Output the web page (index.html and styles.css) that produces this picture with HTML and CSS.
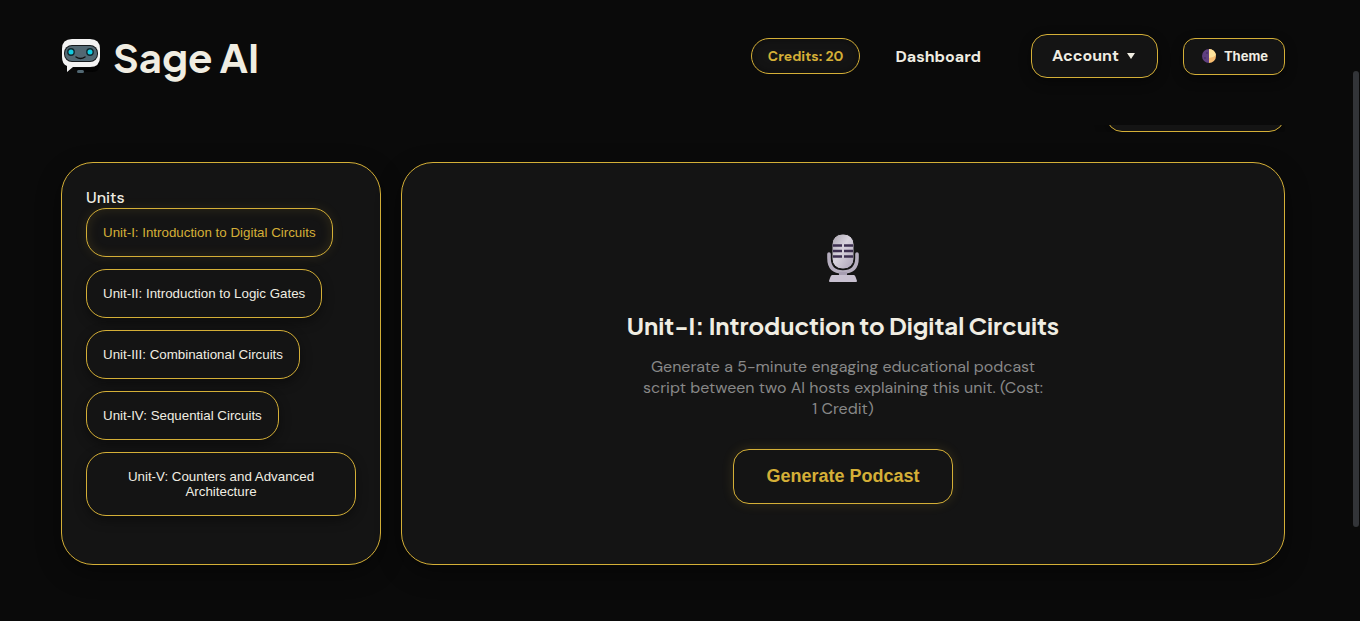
FILE: index.html
```html
<!DOCTYPE html>
<html lang="en">
<head>
    <meta charset="UTF-8">
    <meta name="viewport" content="width=device-width, initial-scale=1.0">
    <title>Sage AI</title>
    <link rel="stylesheet" href="styles.css">
</head>
<body>
    <div class="page">
        <header class="header">
            <a class="logo" href="#">
                <svg class="logo-icon" viewBox="0 0 40 40" aria-hidden="true">
                    <path d="M12 32h18q9-1 9-11v6q0 9-8 9H21z" fill="#030303"/>
                    <path d="M11 3h18q10 0 10 10v8q0 10-10 10H12l-6 5v-6q-5-2-5-9v-8Q1 3 11 3z" fill="#f3f3f3"/>
                    <rect x="3" y="9" width="34" height="17" rx="8" fill="#15191c"/>
                    <rect x="4" y="10" width="32" height="15" rx="7" fill="#526873"/>
                    <circle cx="10" cy="16" r="3.200" fill="#14cbe0" stroke="#10282f" stroke-width="1.4"/>
                    <circle cx="29" cy="16" r="3.200" fill="#14cbe0" stroke="#10282f" stroke-width="1.4"/>
                    <path d="M15 21q4.500 3 9 0" fill="none" stroke="#111" stroke-width="1.4" stroke-linecap="round"/>
                    <rect x="16" y="34" width="7" height="3" rx="1.500" fill="#526873"/>
                </svg>
                <span>Sage AI</span>
            </a>
            <nav class="nav">
                <span class="credits">Credits: 20</span>
                <a class="nav-link" href="#">Dashboard</a>
                <button class="account" type="button">Account <span class="caret"></span></button>
                <button class="theme" type="button">
                    <svg class="theme-icon" viewBox="0 0 14 14" aria-hidden="true">
                        <path d="M7 0a7 7 0 0 0 0 14z" fill="#604080"/>
                        <path d="M7 0a7 7 0 0 1 0 14z" fill="#f8bd70"/>
                        <path d="M7 0a7 7 0 0 1 7 6q-3 3-7 3z" fill="#ffe39a"/>
                        <circle cx="3" cy="9" r="1" fill="#4a3268"/>
                        <circle cx="5" cy="4" r="1" fill="#4a3268"/>
                    </svg>
                    Theme
                </button>
            </nav>
        </header>
        <main class="content">
            <div class="toolbar">
                <button class="toolbar-button" type="button" aria-label="Back"></button>
            </div>
            <div class="layout">
                <aside class="panel units">
                    <h2 class="units-title">Units</h2>
                    <div class="unit-list">
                        <button class="unit active" type="button">Unit-I: Introduction to Digital Circuits</button>
                        <button class="unit" type="button">Unit-II: Introduction to Logic Gates</button>
                        <button class="unit" type="button">Unit-III: Combinational Circuits</button>
                        <button class="unit" type="button">Unit-IV: Sequential Circuits</button>
                        <button class="unit" type="button">Unit-V: Counters and Advanced Architecture</button>
                    </div>
                </aside>
                <section class="panel podcast">
                    <svg class="mic" viewBox="0 0 32 48" aria-hidden="true">
                        <defs>
                            <linearGradient id="mic-body" x1="0" y1="0" x2="1" y2="1">
                                <stop offset="0" stop-color="#aaa4b0"/>
                                <stop offset="0.450" stop-color="#d8d3dd"/>
                                <stop offset="1" stop-color="#aaa0b6"/>
                            </linearGradient>
                        </defs>
                        <path d="M2 20v4q0 14 14 14t14-14v-4" fill="none" stroke="#b5adbe" stroke-width="3.600" stroke-linecap="round"/>
                        <path d="M12 38h8v4h-8z" fill="#a79eb2"/>
                        <rect x="5" y="0" width="22" height="35" rx="10" fill="url(#mic-body)" stroke="#141414"/>
                        <path d="M6 11.500h9m2 0h9M6 17h9m2 0h9M6 22.500h9m2 0h9" stroke="#3d2f50" stroke-width="2.400"/>
                        <path d="M5 41h22q1 0 2 3l1 3q0 1-1 1H3q-1 0-1-1l1-3q1-3 2-3z" fill="#c8c0d0"/>
                    </svg>
                    <h1 class="podcast-title">Unit-I: Introduction to Digital Circuits</h1>
                    <p class="podcast-text">Generate a 5-minute engaging educational podcast script between two AI hosts explaining this unit. (Cost: 1&nbsp;Credit)</p>
                    <button class="generate" type="button">Generate Podcast</button>
                </section>
            </div>
        </main>
    </div>
    <div class="scroll-track"><div class="scroll-thumb"></div></div>
</body>
</html>
```
FILE: styles.css
```css
* {
    box-sizing: border-box;
}
body {
    font-family: "DM Sans", Inter, sans-serif;
    display: flex;
    min-height: 100vh;
    margin: 0;
    background: #0a0a0a;
    color: #f0ede2;
}
button {
    font-family: "Liberation Sans", Arial, sans-serif;
    background: #141414;
    border: 1px solid #d4af37;
    color: #f0ede2;
    box-shadow: 0 4px 12px rgba(0, 0, 0, 0.4);
    cursor: pointer;
}
.page {
    flex: 1;
    min-width: 0;
    padding: 0 61px;
}
.header {
    display: flex;
    justify-content: space-between;
    align-items: center;
    height: 125px;
    padding-bottom: 13px;
}
.logo {
    display: flex;
    align-items: center;
    gap: 12px;
    color: inherit;
    font-family: "Plus Jakarta Sans", "DM Sans", Inter, sans-serif;
    font-size: 40px;
    font-weight: 700;
    text-decoration: none;
}
.logo-icon {
    width: 40px;
    height: 40px;
}
.nav {
    display: flex;
    align-items: center;
}
.credits {
    padding: 8px 16px;
    border: 1px solid #d4af37;
    border-radius: 18px;
    background: #141414;
    color: #d4af37;
    font-size: 14px;
    line-height: 18px;
    font-weight: 700;
    box-shadow: inset 0 0 8px rgba(0, 0, 0, 0.4);
}
.nav-link {
    margin: 0 50px 0 35px;
    color: inherit;
    font-size: 16px;
    font-weight: 700;
    text-decoration: none;
}
.account {
    display: flex;
    align-items: center;
    gap: 8px;
    margin-right: 25px;
    padding: 10px 22px 10px 20px;
    border-radius: 16px;
    font-family: inherit;
    font-size: 16px;
    line-height: 22px;
    font-weight: 700;
}
.caret {
    border: 4px solid transparent;
    border-top: 6px solid #f0ede2;
    border-bottom: 0;
}
.theme {
    display: flex;
    align-items: center;
    gap: 8px;
    padding: 9px 16px 9px 18px;
    border-radius: 12px;
    font-family: Inter, sans-serif;
    font-size: 13px;
    line-height: 17px;
    font-weight: 700;
}
.theme-icon {
    width: 14px;
    height: 14px;
}
/* only the lower edge of this row shows under the header */
.toolbar {
    display: flex;
    justify-content: flex-end;
    align-items: flex-end;
    height: 7px;
    margin-bottom: 30px;
    overflow: hidden;
}
.toolbar-button {
    flex-shrink: 0;
    width: 179px;
    height: 44px;
    border-radius: 16px;
}
.layout {
    display: grid;
    grid-template-columns: 320px 1fr;
    gap: 20px;
}
.panel {
    border: 1px solid #d4af37;
    border-radius: 32px;
    background: #141414;
    box-shadow: 0 8px 24px rgba(0, 0, 0, 0.4);
}
.units {
    padding: 24px;
}
.units-title {
    margin: 0;
    font-size: 16px;
    line-height: 21px;
    font-weight: 500;
}
.unit-list {
    display: flex;
    flex-direction: column;
    align-items: flex-start;
    gap: 12px;
}
.unit {
    padding: 16px;
    border-radius: 20px;
    line-height: 15px;
}
.unit.active {
    color: #d4af37;
    box-shadow: inset 0 0 12px rgba(212, 175, 55, 0.15), 0 0 12px rgba(212, 175, 55, 0.1);
}
.podcast {
    display: flex;
    flex-direction: column;
    align-items: center;
    padding: 71px 60px 60px;
    text-align: center;
}
.mic {
    width: 32px;
    height: 48px;
}
.podcast-title {
    margin: 28px 0 16px;
    font-family: "Plus Jakarta Sans", "DM Sans", Inter, sans-serif;
    font-size: 24px;
    line-height: 30px;
    font-weight: 700;
}
.podcast-text {
    max-width: 400px;
    margin: 0 0 30px;
    color: #888;
    font-size: 16px;
    line-height: 21px;
}
.generate {
    padding: 16px 32px;
    border-radius: 16px;
    color: #d4af37;
    font-size: 18px;
    line-height: 21px;
    font-weight: 700;
    box-shadow: 0 0 12px rgba(212, 175, 55, 0.15);
}
.scroll-track {
    width: 14px;
    padding: 71px 1px 0 7px;
}
.scroll-thumb {
    height: 456px;
    border-radius: 3px;
    background: #323438;
}
```
